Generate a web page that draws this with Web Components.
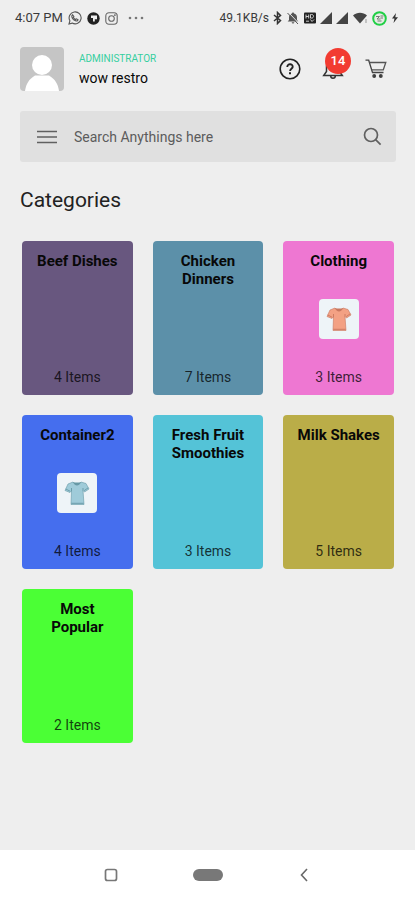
<!DOCTYPE html>
<html lang="en">
<head>
<meta charset="utf-8">
<meta name="viewport" content="width=device-width, initial-scale=1">
<title>Categories</title>
<style>
html, body { margin: 0; min-height: 100%; background: #eeeeee; }
body { font-family: Roboto, "Liberation Sans", sans-serif; color: #111; }
</style>
</head>
<body>
<shop-app></shop-app>
<script>
const base = `<style>
*, *::before { box-sizing: border-box; }
svg { display: block; flex: none; }
button { border: 0; padding: 0; margin: 0; background: none; font: inherit; color: inherit; cursor: pointer; }
</style>`;
function define(tag, html, setup) {
  const template = document.createElement('template');
  template.innerHTML = base + html;
  customElements.define(tag, class extends HTMLElement {
    constructor() {
      super();
      this.attachShadow({ mode: 'open' }).append(template.content.cloneNode(true));
    }
    connectedCallback() { if (setup) setup(this, this.shadowRoot); }
  });
}

define('status-bar', `<style>
:host { display: flex; align-items: center; justify-content: space-between; height: 36px; padding: 0 16px 0 15px; font-size: 13px; line-height: 16px; color: #3a3a3a; }
.group { display: flex; align-items: center; white-space: nowrap; }
.left { gap: 5px; }
.left span { font-size: 13px; }
.right { gap: 4px; }
.right span { font-size: 12px; }
</style>
<div class="group left"><span>4:07 PM</span>
<svg width="14" height="14" viewBox="0 0 14 14" fill="none" stroke="#555" stroke-width="1.1"><path d="M1 13l.9-3.2A6 6 0 1 1 4.2 12.1z"/><path d="M4.6 3.8l1.3 1.8-.5 1c.5 1 1.200 1.500 2.100 1.900l.9-.7 1.700.9c-.3 1.300-1.400 1.500-2.500 1.100C5.700 9.100 4 7.300 3.800 5.500c0-.7.3-1.300.8-1.700z"/></svg>
<svg width="13" height="13" viewBox="0 0 13 13"><circle cx="6.500" cy="6.500" r="6.200" fill="#222"/><path d="M4 3.500h6v3.700H7.800v2.200H6V6H4z" fill="#eee"/></svg>
<svg width="13" height="13" viewBox="0 0 13 13" fill="none" stroke="#666" stroke-width="1.1"><rect x=".8" y=".8" width="11.400" height="11.400" rx="3.200"/><circle cx="6.500" cy="6.500" r="2.800"/><circle cx="9.900" cy="3.100" r=".4"/></svg>
<svg width="26" height="12" viewBox="0 0 26 12" fill="#777"><circle cx="7" cy="6" r="1.300"/><circle cx="13" cy="6" r="1.300"/><circle cx="19" cy="6" r="1.300"/></svg>
</div>
<div class="group right"><span>49.1KB/s</span>
<svg width="9" height="14" viewBox="0 0 9 14" fill="none" stroke="#333" stroke-width="1.500"><path d="M1 4l6.500 5.500L4.500 12.500v-11L7.500 4.500 1 10"/></svg>
<svg width="14" height="14" viewBox="0 0 14 14"><path d="M7 1.500c.7 0 1 .5 1 1 2 .5 3 2 3 4v2.500l1.300 1.500H1.700L3 9V6.500c0-2 1-3.500 3-4 0-.5.3-1 1-1z" fill="#555"/><path d="M5.700 11.300h2.600a1.300 1.300 0 0 1-2.600 0z" fill="#555"/><path d="M2.500 1.500l10 10.500" stroke="#eee" stroke-width="1"/><path d="M1.500 2l10.500 11" stroke="#555" stroke-width="1"/></svg>
<svg width="12" height="12" viewBox="0 0 12 12"><rect y=".5" width="12" height="11" rx="1" fill="#222"/><path d="M2 2.500v4M4.700 2.500v4M2 4.500h2.700M6.500 2.500v3.600h1.200c2.400 0 2.400-3.600 0-3.600zM2 9.200h3M6.500 7.500l1.500 2 2-2" fill="none" stroke="#ddd" stroke-width=".9"/></svg>
<svg width="12" height="12" viewBox="0 0 12 12"><path d="M12 0v12H0z" fill="#444"/></svg>
<svg width="12" height="12" viewBox="0 0 12 12"><path d="M12 0v12H0z" fill="#444"/></svg>
<svg width="16" height="12" viewBox="0 0 16 12"><path d="M1 3.500C5-.2 11-.2 15 3.500L8 11.500z" fill="#444"/><path d="M14 7v4" stroke="#999"/></svg>
<svg width="15" height="15" viewBox="0 0 15 15"><circle cx="7.500" cy="7.500" r="6.300" fill="#e4eee4" stroke="#20cf45" stroke-width="2"/><path d="M4 5.500h3.500L5 8h3.500M8.500 5h3M8.500 7h2.500M5.500 10h4" stroke="#777" fill="none"/></svg>
<svg width="8" height="12" viewBox="0 0 8 12"><path d="M5 1L1 6.500h2.500L2.500 11 7 5.200H4.300z" fill="#333"/></svg>
</div>`);

define('user-badge', `<style>
:host { display: flex; align-items: center; gap: 15px; }
.text { display: flex; flex-direction: column; gap: 3px; }
.role { font-size: 10px; line-height: 14px; color: #36cfa0; }
.name { font-size: 14px; line-height: 18px; color: #080808; }
</style>
<svg width="44" height="44" viewBox="0 0 44 44" role="img" aria-label="Profile picture"><rect width="44" height="44" rx="4" fill="#c5c5c5"/><circle cx="22" cy="18" r="10" fill="#fff"/><path d="M5 44c1-7 4-12 10-15.500h14c6 3.500 9 8.500 10 15.500z" fill="#fff"/></svg>
<div class="text"><span class="role"><slot name="role"></slot></span><span class="name"><slot></slot></span></div>`);

define('header-actions', `<style>
:host { display: flex; align-items: center; gap: 18px; }
button { position: relative; width: 25px; height: 25px; display: grid; place-items: center; }
.badge { position: absolute; left: 5px; bottom: 8px; width: 26px; height: 26px; border-radius: 50%; background: #f23b31; color: #fff; font-size: 13px; line-height: 26px; font-weight: 500; text-align: center; }
</style>
<button aria-label="Help"><svg width="22" height="22" viewBox="0 0 22 22" fill="none" stroke="#222"><circle cx="11" cy="11" r="9.800" stroke-width="1.600"/><path d="M8.300 8.900c0-3.700 5.600-3.500 5.400 0-.1 1.800-2.600 2-2.600 4" stroke-width="1.900"/><path d="M11 14.300v2" stroke-width="2"/></svg></button>
<button aria-label="Notifications"><svg width="22" height="24" viewBox="0 0 22 24" fill="none" stroke="#333" stroke-width="1.500"><path d="M11 2c4 0 6.500 3 6.500 7v5.500l2.800 4H1.700l2.800-4V9c0-4 2.500-7 6.500-7z"/><path d="M8.700 18.700c0 3.400 4.600 3.400 4.600 0"/></svg><span class="badge">14</span></button>
<button aria-label="Cart"><svg width="22" height="20" viewBox="0 0 22 20" fill="none" stroke="#444" stroke-width="1.300"><path d="M.5 1.200h3.200l3.800 12.300h11"/><path d="M4.500 3.500h16.300l-2.500 7.300H6.700" stroke="#555"/><circle cx="9.200" cy="17" r="1.300" fill="#333"/><circle cx="15.800" cy="17" r="1.300" fill="#333"/></svg></button>`);

define('search-bar', `<style>
:host { display: block; }
form { display: flex; align-items: center; height: 51px; padding: 0 14px 0 17px; background: #e0e0e0; border-radius: 3px; color: #666; }
button { display: grid; place-items: center; height: 32px; }
input { flex: 1; min-width: 0; border: 0; outline: 0; padding: 0; margin: 0 16px 0 17px; background: none; font: 14px/20px Roboto, "Liberation Sans", sans-serif; color: #333; }
input::placeholder { color: #5c5c5c; opacity: 1; }
</style>
<form role="search"><button type="button" aria-label="Menu"><svg width="20" height="14" viewBox="0 0 20 14" stroke="#606060" stroke-width="1.700"><path d="M0 1.500h20M0 7h20M0 12.500h20"/></svg></button>
<input type="search" aria-label="Search" placeholder="Search Anythings here">
<button type="submit" aria-label="Submit search"><svg width="19" height="19" viewBox="0 0 19 19" fill="none" stroke="#606060" stroke-width="1.700"><circle cx="8" cy="8" r="6.500"/><path d="M12.600 12.600l5 5"/></svg></button></form>`);

define('category-card', `<style>
:host { display: block; }
a { display: flex; flex-direction: column; align-items: center; justify-content: space-between; position: relative; height: 154px; padding: 11px 8px 9px; border-radius: 4px; background: var(--card); color: #080808; text-align: center; text-decoration: none; }
h2 { margin: 0; max-width: 88px; font-size: 15px; line-height: 18px; font-weight: 700; }
.count { font-size: 14px; line-height: 18px; color: rgba(0, 0, 0, .76); }
</style>
<a href="#"><h2></h2><slot></slot><span class="count"></span></a>`, (host, root) => {
  root.querySelector('a').style.setProperty('--card', host.getAttribute('color'));
  root.querySelector('h2').textContent = host.getAttribute('name');
  root.querySelector('.count').textContent = host.getAttribute('count') + ' Items';
});

define('shirt-tile', `<style>
:host { display: grid; place-items: center; width: 40px; height: 40px; border-radius: 4px; background: #eef4f8; }
</style>
<svg width="26" height="26" viewBox="0 0 26 26" role="img" aria-label="T-shirt"><path d="M9 2L4 4 1 10.500l5 2L7.500 11 7 24.500h13L19 10.500l1.500 1.500 4.500-3L22 3.500 17 2c-1.500 3-6.500 3-8 0z" fill="var(--shirt)" stroke="var(--trim)" stroke-width=".6"/><path d="M9 2c1.500 4.500 6.500 4.500 8 0-2.500.7-5.500.7-8 0z" fill="var(--trim)"/><path d="M1.800 9l4.500 2.300M24.200 7.800l-4 2.800M7.300 23.300h12.300M7.500 11V8M19 10.500V8" stroke="var(--trim)" stroke-width=".9" fill="none"/></svg>`);

define('nav-bar', `<style>
:host { display: block; background: #fff; }
nav { display: grid; grid-template-columns: repeat(3, 97px); justify-content: center; height: 50px; }
button { display: grid; place-items: center; }
</style>
<nav aria-label="System"><button aria-label="Recent apps"><svg width="14" height="14" viewBox="0 0 14 14"><rect x="1.500" y="1.500" width="11" height="11" rx="2" fill="none" stroke="#777" stroke-width="1.700"/></svg></button>
<button aria-label="Home"><svg width="30" height="14" viewBox="0 0 30 14"><rect y="1" width="30" height="12" rx="6" fill="#787878"/></svg></button>
<button aria-label="Back"><svg width="10" height="14" viewBox="0 0 10 14" fill="none" stroke="#686868" stroke-width="1.600"><path d="M7 1L1.500 7 7 13"/></svg></button></nav>`);

define('shop-app', `<style>
:host { display: flex; flex-direction: column; min-height: 100vh; }
main { flex: 1; padding: 11px 19px 20px 20px; }
header { display: flex; align-items: center; justify-content: space-between; }
header-actions { margin-right: 8px; }
search-bar { margin-top: 20px; }
h1 { margin: 24px 0 0; font-size: 21px; line-height: 28px; font-weight: 400; color: #222; }
.grid { display: grid; grid-template-columns: repeat(3, 1fr); gap: 20px; margin: 27px 2px 0; }
.coral { --shirt: #f3a184; --trim: #c8775f; }
.blue { --shirt: #9fcbd9; --trim: #6799a6; }
</style>
<status-bar></status-bar>
<main>
<header><user-badge><span slot="role">ADMINISTRATOR</span>wow restro</user-badge><header-actions></header-actions></header>
<search-bar></search-bar>
<h1>Categories</h1>
<section class="grid" aria-label="Categories">
<category-card name="Beef Dishes" count="4" color="#68577f"></category-card>
<category-card name="Chicken Dinners" count="7" color="#5c90a9"></category-card>
<category-card name="Clothing" count="3" color="#ee77d2"><shirt-tile class="coral"></shirt-tile></category-card>
<category-card name="Container2" count="4" color="#456eee"><shirt-tile class="blue"></shirt-tile></category-card>
<category-card name="Fresh Fruit Smoothies" count="3" color="#54c3d7"></category-card>
<category-card name="Milk Shakes" count="5" color="#baad48"></category-card>
<category-card name="Most Popular" count="2" color="#4bff35"></category-card>
</section>
</main>
<nav-bar></nav-bar>`);
</script>
</body>
</html>
